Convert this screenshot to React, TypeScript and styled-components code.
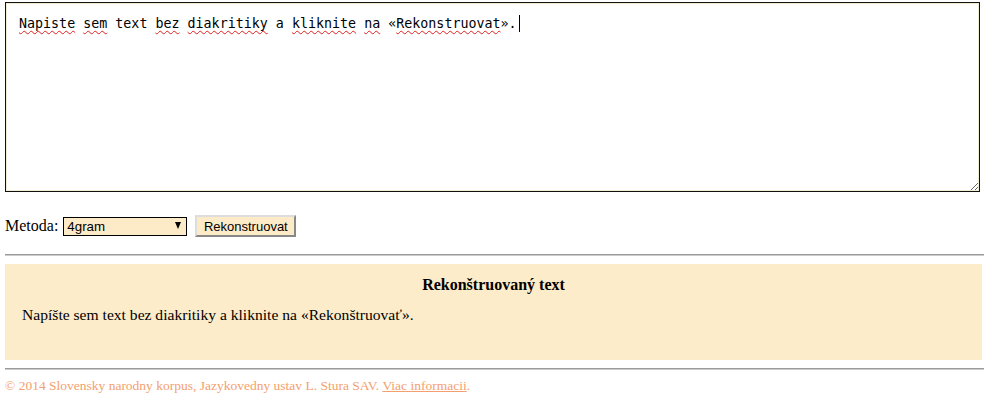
import React from "react";
import styled, { createGlobalStyle } from "styled-components";

const Global = createGlobalStyle`
  html, body { margin: 0; padding: 0; background: #fff; }
  body { font-family: "Liberation Serif", "Times New Roman", serif; font-size: 16px; color: #000; }
`;

const Page = styled.div`
  padding: 2px 0 0 5px;
  display: flex;
  flex-direction: column;
`;

const Editor = styled.div`
  box-sizing: border-box;
  width: 975px;
  height: 190px;
  margin: 0;
  padding: 11px 13px;
  border: 1px solid #111;
  box-shadow: inset 0 0 0 1px #f3ecd4;
  font-family: "DejaVu Sans Mono", monospace;
  font-size: 13.33px;
  line-height: 19px;
  color: #000;
  resize: both;
  overflow: auto;
  outline: none;
  white-space: pre-wrap;
`;

const Misspelled = styled.span`
  text-decoration: underline wavy #e02020;
  text-decoration-thickness: 1px;
  text-underline-offset: 2px;
  text-decoration-skip-ink: none;
`;

const Caret = styled.span`
  display: inline-block;
  width: 0;
  height: 17px;
  margin-left: 2px;
  border-left: 1px solid #000;
  vertical-align: -4px;
`;

const Controls = styled.div`
  display: flex;
  align-items: center;
  margin-top: 23px;
  height: 22px;
`;

const Label = styled.span`
  font-size: 16px;
  margin-right: 5px;
`;

const SelectWrap = styled.div`
  position: relative;
  display: flex;
`;

const Select = styled.select`
  box-sizing: border-box;
  width: 124px;
  height: 19px;
  border: 1px solid #000;
  border-radius: 0;
  background: #fdebc8;
  font-family: "Liberation Sans", Arial, sans-serif;
  font-size: 13.33px;
  padding: 0 0 0 3px;
  appearance: none;
`;

const Arrow = styled.span`
  position: absolute;
  right: 6px;
  top: 5px;
  width: 0;
  height: 0;
  border-left: 3.5px solid transparent;
  border-right: 3.5px solid transparent;
  border-top: 7px solid #000;
  pointer-events: none;
`;

const Button = styled.button`
  box-sizing: border-box;
  margin-left: 8px;
  height: 22px;
  width: 101px;
  padding: 0;
  background: #fdebc8;
  border: 2px solid;
  border-color: #ddd #888 #888 #ddd;
  font-family: "Liberation Sans", Arial, sans-serif;
  font-size: 13px;
  color: #000;
`;

const Rule = styled.hr`
  margin: 17px 0 0 0;
  width: 979px;
  height: 0;
  border: 0;
  border-top: 1px solid #999;
  border-bottom: 1px solid #ccc;
`;

const Panel = styled.div`
  width: 977px;
  height: 96px;
  margin-top: 8px;
  background: #fdecca;
  box-sizing: border-box;
  padding: 11px 17px 0;
`;

const PanelTitle = styled.div`
  text-align: center;
  font-weight: bold;
  font-size: 16px;
  line-height: 20px;
`;

const PanelText = styled.div`
  margin-top: 10px;
  font-size: 15.6px;
  line-height: 20px;
`;

const Rule2 = styled(Rule)`
  margin-top: 8px;
`;

const Footer = styled.div`
  margin-top: 8px;
  font-size: 13.5px;
  color: #f4a06e;
`;

const FooterLink = styled.a`
  color: #f4a06e;
  text-decoration: underline;
`;

export default function App() {
  return (
    <>
      <Global />
      <Page>
        <Editor contentEditable suppressContentEditableWarning spellCheck={false}>
          <Misspelled>Napiste</Misspelled> <Misspelled>sem</Misspelled> text{" "}
          <Misspelled>bez</Misspelled> <Misspelled>diakritiky</Misspelled> a{" "}
          <Misspelled>kliknite</Misspelled> <Misspelled>na</Misspelled> «
          <Misspelled>Rekonstruovat</Misspelled>».
          <Caret />
        </Editor>
        <Controls>
          <Label>Metoda:</Label>
          <SelectWrap>
            <Select defaultValue="4gram">
              <option value="4gram">4gram</option>
            </Select>
            <Arrow />
          </SelectWrap>
          <Button>Rekonstruovat</Button>
        </Controls>
        <Rule />
        <Panel>
          <PanelTitle>Rekonštruovaný text</PanelTitle>
          <PanelText>Napíšte sem text bez diakritiky a kliknite na «Rekonštruovať».</PanelText>
        </Panel>
        <Rule2 />
        <Footer>
          © 2014 Slovensky narodny korpus, Jazykovedny ustav L. Stura SAV.{" "}
          <FooterLink href="#">Viac informacii</FooterLink>.
        </Footer>
      </Page>
    </>
  );
}
